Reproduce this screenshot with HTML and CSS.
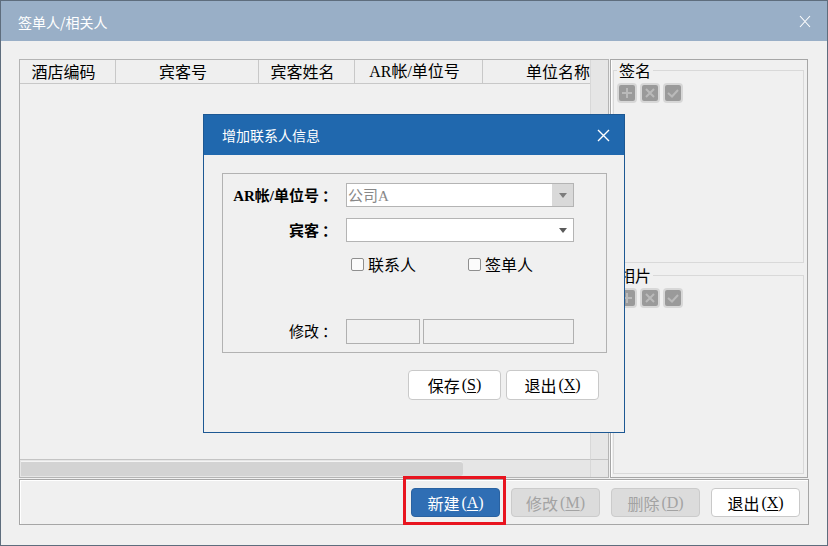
FILE: index.html
```html
<!DOCTYPE html>
<html lang="zh-CN">
<head>
  <meta charset="UTF-8">
  <title>签单人/相关人</title>
  <link rel="stylesheet" href="styles.css">
</head>
<body>
  <div class="window">
    <div class="titlebar">
      <span class="title">签单人/相关人</span>
      <svg class="win-close" width="12" height="13" viewBox="0 0 12 13"><path d="M1 1 L11 12 M11 1 L1 12" stroke="#fff" stroke-width="1.1" fill="none"/></svg>
    </div>

    <div class="content">
      <div class="main">
        <div class="grid">
          <div class="grid-view">
            <div class="grid-head">
              <div class="col c1">酒店编码</div>
              <div class="col c2">宾客号</div>
              <div class="col c3">宾客姓名</div>
              <div class="col c4">AR帐/单位号</div>
              <div class="col c5">单位名称</div>
            </div>
          </div>
          <div class="vscroll"></div>
          <div class="hscroll"><div class="thumb"></div></div>
          <div class="corner"></div>
        </div>

        <div class="side">
          <fieldset class="group sign">
            <legend>签名</legend>
            <div class="tools">
              <span class="tool"><svg width="16" height="16" viewBox="0 0 16 16"><path d="M8 3 V13 M3 8 H13" stroke="#bababa" stroke-width="2"/></svg></span>
              <span class="tool"><svg width="16" height="16" viewBox="0 0 16 16"><path d="M4 4 L12 12 M12 4 L4 12" stroke="#bababa" stroke-width="2"/></svg></span>
              <span class="tool"><svg width="16" height="16" viewBox="0 0 16 16"><path d="M3 8 L7 11.5 L13 5" stroke="#bababa" stroke-width="2" fill="none"/></svg></span>
            </div>
          </fieldset>
          <fieldset class="group photo">
            <legend>相片</legend>
            <div class="tools">
              <span class="tool"><svg width="16" height="16" viewBox="0 0 16 16"><path d="M8 3 V13 M3 8 H13" stroke="#bababa" stroke-width="2"/></svg></span>
              <span class="tool"><svg width="16" height="16" viewBox="0 0 16 16"><path d="M4 4 L12 12 M12 4 L4 12" stroke="#bababa" stroke-width="2"/></svg></span>
              <span class="tool"><svg width="16" height="16" viewBox="0 0 16 16"><path d="M3 8 L7 11.5 L13 5" stroke="#bababa" stroke-width="2" fill="none"/></svg></span>
            </div>
          </fieldset>
        </div>
      </div>

      <div class="toolbar">
        <button type="button" class="btn primary marked">新建<span class="key">(<u>A</u>)</span></button>
        <button type="button" class="btn disabled">修改<span class="key">(<u>M</u>)</span></button>
        <button type="button" class="btn disabled">删除<span class="key">(<u>D</u>)</span></button>
        <button type="button" class="btn">退出<span class="key">(<u>X</u>)</span></button>
      </div>
    </div>

    <div class="dialog">
      <div class="dialog-bar">
        <span class="dialog-title">增加联系人信息</span>
        <svg class="dialog-close" width="13" height="13" viewBox="0 0 13 13"><path d="M1 1 L12 12 M12 1 L1 12" stroke="#fff" stroke-width="1.4" fill="none"/></svg>
      </div>
      <div class="dialog-body">
        <div class="form">
          <div class="row r1">
            <label class="lbl">AR帐/单位号<span class="colon">：</span></label>
            <div class="combo off">
              <span class="combo-text">公司<span class="latin">A</span></span>
              <span class="combo-btn"><i class="arrow"></i></span>
            </div>
          </div>
          <div class="row r2">
            <label class="lbl">宾客<span class="colon">：</span></label>
            <div class="combo">
              <span class="combo-text"></span>
              <span class="combo-btn"><i class="arrow"></i></span>
            </div>
          </div>
          <div class="row r3">
            <span class="check"><i class="box"></i>联系人</span>
            <span class="check"><i class="box"></i>签单人</span>
          </div>
          <div class="row r4">
            <label class="lbl plain">修改<span class="colon">：</span></label>
            <span class="field short"></span>
            <span class="field long"></span>
          </div>
        </div>
        <div class="actions">
          <button type="button" class="btn">保存<span class="key">(<u>S</u>)</span></button>
          <button type="button" class="btn">退出<span class="key">(<u>X</u>)</span></button>
        </div>
      </div>
    </div>
  </div>
</body>
</html>
```

FILE: styles.css
```css
* {
  box-sizing: border-box;
}

html,
body {
  margin: 0;
  padding: 0;
  background: #f0f0f0;
}

body {
  font-family: "Noto Sans CJK SC", sans-serif;
  color: #000;
}

.window {
  position: relative;
  width: 828px;
  height: 546px;
  border: 1px solid #5e6d7d;
  background: #f0f0f0;
  display: flex;
  flex-direction: column;
}

.titlebar {
  height: 40px;
  background: #99afc7;
  display: flex;
  align-items: center;
  justify-content: space-between;
  padding: 0 16px 0 17px;
  color: #fff;
}

.title {
  font-size: 14px;
  line-height: 16px;
  margin-top: 1px;
}

.win-close {
  display: block;
}

.content {
  flex: 1;
  padding: 18px 18px 20px 18px;
  display: flex;
  flex-direction: column;
}

.main {
  height: 419px;
  display: flex;
  gap: 1px;
}

/* table */
.grid {
  width: 590px;
  height: 419px;
  border: 1px solid #b4b4b4;
  display: grid;
  grid-template-columns: 570px 18px;
  grid-template-rows: 399px 18px;
}

.grid-view {
  overflow: hidden;
}

.grid-head {
  display: flex;
  height: 24px;
  border-bottom: 1px solid #c8c8c8;
  background: #efefef;
}

.col {
  flex: none;
  font-size: 16px;
  line-height: 23px;
  text-align: center;
  padding-right: 8px;
  border-right: 1px solid #c8c8c8;
  white-space: nowrap;
  overflow: hidden;
}

.c4 {
  font-family: "Liberation Serif", "Noto Sans CJK SC", serif;
}

.c1 { width: 96px; }
.c2 { width: 143px; }
.c3 { width: 96px; }
.c4 { width: 128px; }
.c5 {
  width: 107px;
  text-align: right;
  padding-right: 0;
  border-right: none;
}

.vscroll {
  background: #e6e6e6;
  border-left: 1px solid #d8d8d8;
}

.hscroll {
  background: #e6e6e6;
  border-top: 1px solid #c4c4c4;
  padding: 1px 0 1px 1px;
}

.thumb {
  width: 442px;
  height: 100%;
  background: #d3d3d3;
  border-top: 1px solid #f4f4f4;
  border-radius: 0 3px 3px 0;
}

.corner {
  background: #e6e6e6;
  border-top: 1px solid #c4c4c4;
  border-left: 1px solid #d8d8d8;
}

/* right panel */
.side {
  width: 198px;
  height: 419px;
  border: 1px solid #a6a6a6;
  box-shadow: inset 1px 0 0 #fff;
  padding: 1px 3px 3px 2px;
  display: flex;
  flex-direction: column;
  gap: 3px;
}

.group {
  margin: 0;
  padding: 4px 3px;
  border: 1px solid #d9d9d9;
  min-width: 0;
}

.group.sign {
  height: 202px;
}

.group.photo {
  flex: 1;
}

.group legend {
  font-size: 16px;
  line-height: 18px;
  padding: 0 2px;
  margin-left: 0;
}

.tools {
  display: flex;
  gap: 3px;
}

.tool {
  width: 20px;
  height: 20px;
  border: 2px solid #d7d7d7;
  border-radius: 4px;
  background: #9a9a9a;
  display: flex;
  align-items: center;
  justify-content: center;
}

.tool svg {
  display: block;
}

/* bottom bar */
.toolbar {
  margin-top: 1px;
  height: 46px;
  border: 1px solid #a6a6a6;
  box-shadow: inset 1px 1px 0 #fff;
  display: flex;
  align-items: center;
  justify-content: flex-end;
  gap: 11px;
  padding: 1px 8px 0 0;
}

.btn {
  height: 29px;
  width: 89px;
  padding: 0;
  border: 1px solid #c9c9c9;
  border-radius: 4px;
  background: #fff;
  color: #000;
  font-family: "Noto Sans CJK SC", sans-serif;
  font-size: 16px;
  line-height: 20px;
  display: flex;
  align-items: center;
  justify-content: center;
}

.key {
  font-family: "Liberation Serif", serif;
  font-size: 16px;
  margin-left: 2px;
}

.key u {
  text-underline-offset: 2px;
}

.btn.primary {
  background: #2f6eb4;
  border-color: #2a62a1;
  color: #fff;
}

.btn.disabled {
  background: #dcdcdc;
  border-color: #cbcbcb;
  color: #a3a3a3;
}

.marked {
  position: relative;
}

.marked::after {
  content: "";
  position: absolute;
  left: -9px;
  right: -7px;
  top: -13px;
  bottom: -9px;
  border: 3px solid #e8141f;
}

/* dialog */
.dialog {
  position: absolute;
  left: 202px;
  top: 113px;
  width: 422px;
  height: 319px;
  border: 1px solid #1d5893;
  background: #f0f0f0;
}

.dialog-bar {
  height: 40px;
  background: #2068ae;
  display: flex;
  align-items: center;
  justify-content: space-between;
  padding: 0 14px 0 18px;
  color: #fff;
}

.dialog-title {
  font-size: 14px;
  line-height: 16px;
}

.dialog-close {
  display: block;
}

.dialog-body {
  padding: 18px 17px 0 18px;
}

.form {
  height: 180px;
  border: 1px solid #b2b2b2;
  padding-top: 9px;
}

.row {
  display: flex;
  align-items: center;
}

.r1,
.r2 {
  height: 24px;
}

.r2 {
  margin-top: 11px;
}

.r3 {
  margin-top: 10px;
  height: 24px;
  padding-left: 128px;
  gap: 52px;
}

.r4 {
  margin-top: 43px;
  height: 25px;
}

.lbl {
  width: 114px;
  text-align: right;
  font-family: "Liberation Serif", "Noto Sans CJK SC", serif;
  font-weight: bold;
  font-size: 15px;
  line-height: 18px;
  margin-right: 9px;
  white-space: nowrap;
}

.lbl.plain {
  font-weight: normal;
}

.colon {
  font-family: "Noto Sans CJK SC", sans-serif;
  padding-left: 3px;
}

.combo {
  width: 228px;
  height: 24px;
  border: 1px solid #b4b4b4;
  background: #fff;
  display: flex;
}

.combo-text {
  flex: 1;
  font-size: 15px;
  line-height: 21px;
  padding-left: 1px;
  color: #888;
  font-family: "Noto Sans CJK SC", sans-serif;
}

.latin {
  font-family: "Liberation Serif", serif;
}

.combo-btn {
  width: 21px;
  display: flex;
  align-items: center;
  justify-content: center;
}

.combo.off .combo-btn {
  background: #d9d9d9;
}

.arrow {
  width: 0;
  height: 0;
  border-left: 4px solid transparent;
  border-right: 4px solid transparent;
  border-top: 5px solid #5a5a5a;
  margin-top: 1px;
}

.combo.off .arrow {
  border-top-color: #7c7c7c;
}

.check {
  display: flex;
  align-items: center;
  font-size: 16px;
  line-height: 20px;
}

.box {
  width: 13px;
  height: 13px;
  border: 1px solid #8f8f8f;
  background: #fbfbfb;
  border-radius: 2px;
  margin-right: 4px;
}

.field {
  height: 25px;
  border: 1px solid #b0b0b0;
  background: #f0f0f0;
}

.field.short {
  width: 74px;
  margin-right: 3px;
}

.field.long {
  width: 151px;
}

.actions {
  margin-top: 17px;
  display: flex;
  justify-content: flex-end;
  gap: 5px;
  padding-right: 8px;
}

.actions .btn {
  width: 93px;
  height: 30px;
}
```
